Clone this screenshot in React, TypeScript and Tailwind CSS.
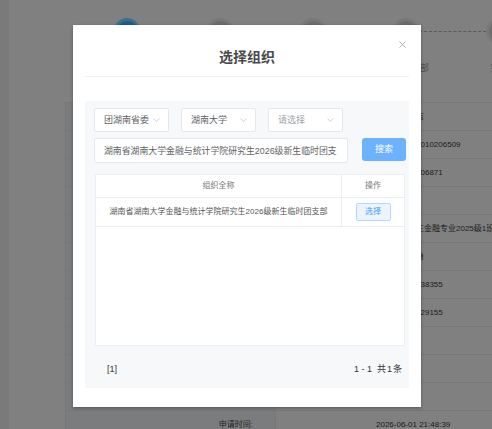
const font = "font-['Liberation_Sans','Noto_Sans_CJK_SC',sans-serif]";

const steps = [
  { label: "填写信息", active: true },
  { label: "团委审核", active: false },
  { label: "学院审核", active: false },
  { label: "选择团支部", active: false },
  { label: "完成", active: false },
];

const rows = [
  { label: "籍贯:", value: "湖南省长沙吉" },
  { label: "身份证号:", value: "4301241998010206509" },
  { label: "学号:", value: "202516020306871" },
  { label: "政治面貌:", value: "" },
  { label: "所在班级:", value: "金融学研究生金融专业2025级1班" },
  { label: "联系人:", value: "湖南大学刘勇" },
  { label: "手机号码:", value: "188731388338355" },
  { label: "紧急电话:", value: "188731326629155" },
  { label: "备注:", value: "" },
  { label: "附件:", value: "" },
  { label: "审核意见:", value: "" },
  { label: "申请时间:", value: "2026-06-01 21:48:39" },
];

function Chevron() {
  return (
    <svg width="7" height="4" viewBox="0 0 7 4" fill="none">
      <path d="M0.5 0.5 L3.5 3.3 L6.5 0.5" stroke="#c0c4cc" strokeWidth="0.8" />
    </svg>
  );
}

function Select({ text, placeholder }: { text: string; placeholder?: boolean }) {
  return (
    <div className="w-[75px] h-[24px] bg-white border border-[#e4e7ed] rounded-[2px] flex items-center justify-between pl-[9px] pr-[8px]">
      <span className={`text-[9px] leading-none ${placeholder ? "text-[#a0a3aa]" : "text-[#606266]"}`}>{text}</span>
      <Chevron />
    </div>
  );
}

function StepCircle({ active }: { active: boolean }) {
  return (
    <div className={`w-[26px] h-[26px] rounded-full flex items-center justify-center shrink-0 ${active ? "bg-[#3d6f8f]" : "bg-[#787878]"}`}>
      <div className={`w-[21px] h-[21px] rounded-full ${active ? "bg-[#1c5f8c]" : "bg-[#6d6d6d]"}`} />
    </div>
  );
}

export default function App() {
  return (
    <div className={`w-[492px] h-[429px] relative overflow-hidden bg-[#808080] ${font}`}>
      {/* page behind the mask */}
      <div className="flex h-full">
        <div className="w-[9px] h-full bg-[#7a7a7a] shrink-0" />
        <div className="flex-1 flex flex-col">
          <div className="h-[102px] shrink-0 pt-[18px] pl-[105px]">
            <div className="flex items-center">
              {steps.map((s, i) => (
                <div key={i} className="flex items-center">
                  <StepCircle active={s.active} />
                  {i < steps.length - 1 && (
                    <div className="w-[67px] border-t border-dashed border-[#5a5a5a]" />
                  )}
                </div>
              ))}
            </div>
            <div className="flex mt-[20px] -ml-[33px]">
              {steps.map((s, i) => (
                <div key={i} className="w-[93px] text-center text-[9px] text-[#4d4d4d] leading-none shrink-0">
                  {s.label}
                </div>
              ))}
            </div>
          </div>
          <div className="ml-[56px] border-t border-l border-[#76777a]">
            {rows.map((r, i) => (
              <div key={i} className="flex h-[28px] border-b border-[#76777a]">
                <div className="w-[210px] shrink-0 bg-[#7b7c7d] border-r border-[#76777a] flex items-center justify-end pr-[22px] text-[8px] text-[#262626]">
                  {r.label}
                </div>
                <div className="flex-1 flex items-center pl-[100px] text-[8px] text-[#1c1c1c] whitespace-nowrap overflow-hidden">
                  {r.value}
                </div>
              </div>
            ))}
          </div>
        </div>
      </div>

      {/* dialog */}
      <div className="absolute left-[73px] top-[25px] w-[348px] h-[382px] bg-white shadow-[0_1px_3px_rgba(0,0,0,0.35)] px-[12px] flex flex-col">
        <div className="relative h-[52px] border-b border-[#f0f0f0] flex items-center justify-center pt-[12px]">
          <span className="text-[14px] font-bold text-[#4a4a4a] leading-none">选择组织</span>
          <svg className="absolute right-[3px] top-[16px]" width="7" height="7" viewBox="0 0 7 7">
            <path d="M0.5 0.5 L6.5 6.5 M6.5 0.5 L0.5 6.5" stroke="#a0a0a0" strokeWidth="0.8" />
          </svg>
        </div>
        <div className="mt-[24px] h-[287px] bg-[#f7f8fa] pl-[9px] pr-[3px] pt-[7px] flex flex-col">
          <div className="flex gap-[12px]">
            <Select text="团湖南省委" />
            <Select text="湖南大学" />
            <Select text="请选择" placeholder />
          </div>
          <div className="flex items-start mt-[6px] gap-[14px]">
            <input
              readOnly
              defaultValue="湖南省湖南大学金融与统计学院研究生2026级新生临时团支部"
              className="w-[254px] h-[25px] bg-white border border-[#e4e7ed] rounded-[2px] pl-[9px] pr-[10px] text-[8.9px] text-[#606266] outline-none"
            />
            <button className="w-[44px] h-[23px] bg-[#6cb2fe] rounded-[3px] text-white text-[9px] leading-none">
              搜索
            </button>
          </div>
          <div className="mt-[11px] w-[310px] ml-[1px] h-[172px] bg-white border border-[#ebeef5] flex flex-col">
            <div className="flex h-[23px] border-b border-[#ebeef5] text-[8px] text-[#777]">
              <div className="flex-1 flex items-center justify-center border-r border-[#ebeef5]">组织全称</div>
              <div className="w-[62px] flex items-center justify-center">操作</div>
            </div>
            <div className="flex h-[29px] border-b border-[#ebeef5] text-[8px] text-[#555]">
              <div className="flex-1 flex items-center justify-center border-r border-[#ebeef5] whitespace-nowrap">
                湖南省湖南大学金融与统计学院研究生2026级新生临时团支部
              </div>
              <div className="w-[62px] flex items-center justify-center">
                <span className="w-[35px] h-[18px] bg-[#ecf5ff] border border-[#b3d8ff] rounded-[2px] text-[#409eff] text-[8px] flex items-center justify-center">
                  选择
                </span>
              </div>
            </div>
          </div>
          <div className="flex justify-between items-center mt-[19px] pl-[13px] pr-[3px] text-[9px] text-[#333] leading-none">
            <span>[1]</span>
            <span className="flex gap-[5px]">
              <span>1 - 1</span>
              <span className="tracking-[1px]">共1条</span>
            </span>
          </div>
        </div>
      </div>
    </div>
  );
}
